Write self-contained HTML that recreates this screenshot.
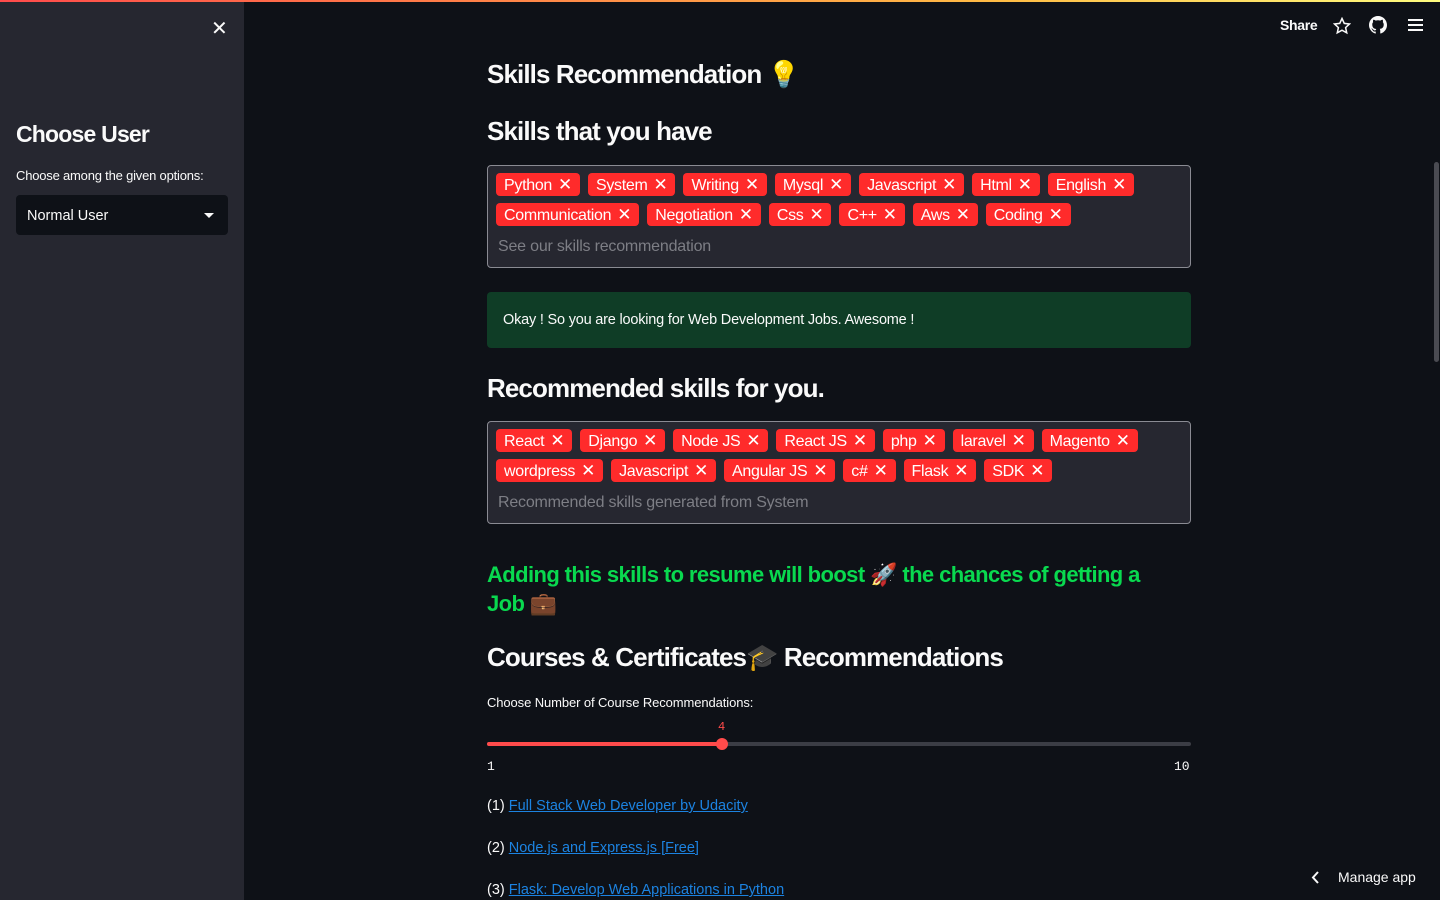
<!DOCTYPE html>
<html><head><meta charset="utf-8"><style>
*{box-sizing:border-box;margin:0;padding:0}
body{width:1440px;height:900px;overflow:hidden;background:#0e1117;font-family:"Liberation Sans",sans-serif;color:#fafafa;position:relative}
.topbar{position:absolute;top:0;left:0;width:1440px;height:2px;background:linear-gradient(90deg,#ff4b4b,#ffbd45 70%,#fffd80)}
.side{position:absolute;top:2px;left:0;width:244px;height:898px;background:#262730}
.side .x{position:absolute;left:211px;top:14px;font-size:20px;color:#fafafa}
.side h2{position:absolute;left:16px;top:119px;font-size:23px;font-weight:bold;letter-spacing:-0.8px}
.side .lbl{position:absolute;left:16px;top:166px;font-size:13px;letter-spacing:-0.2px}
.sel{position:absolute;left:16px;top:193px;width:212px;height:40px;background:#0e1117;border-radius:4px;font-size:14.5px;padding:13px 11px}
.sel .car{position:absolute;right:14px;top:18px;border-left:5px solid transparent;border-right:5px solid transparent;border-top:5px solid #fafafa}
.tr{position:absolute;top:17px;font-size:14px;font-weight:bold}
.h{position:absolute;left:487px;font-weight:bold;font-size:26px;letter-spacing:-0.9px;white-space:nowrap}
.box{position:absolute;left:487px;width:704px;height:103px;background:#262730;border:1px solid #8a8b93;border-radius:4px;padding:7px 8px}
.tag{display:inline-block;background:#ff2b2b;color:#fff;font-size:16px;height:23px;line-height:23px;padding:0 8px 0 8px;border-radius:4px;margin:0 8px 7px 0;letter-spacing:-0.3px}
.tag b{font-weight:normal;margin-left:6px;font-size:17px}
.ph{color:#7d7e85;font-size:16px;margin:5px 3px 0 2px;letter-spacing:-0.2px}
.ok{position:absolute;left:487px;top:292px;width:704px;height:56px;background:#0f3d26;border-radius:4px;font-size:14.5px;padding:20px 16px;letter-spacing:-0.2px}
.green{position:absolute;left:487px;top:560px;width:680px;color:#09d94f;font-weight:bold;font-size:22px;line-height:29px;letter-spacing:-0.6px}
.lk{position:absolute;left:487px;font-size:14.5px;letter-spacing:0px}
.lk a{color:#1c83e1;text-decoration:underline}
</style></head><body>
<div class="topbar"></div>
<div class="side"><div class="x">✕</div><h2>Choose User</h2><div class="lbl">Choose among the given options:</div><div class="sel">Normal User<div class="car"></div></div></div>
<div class="tr" style="left:1280px;letter-spacing:-0.3px">Share</div>
<svg style="position:absolute;left:1333px;top:17px" width="18" height="18" viewBox="0 0 24 24" fill="none" stroke="#fafafa" stroke-width="2"><path d="M12 2l3 6.5 7 .8-5.2 4.8 1.5 7L12 17.6 5.7 21.1l1.5-7L2 9.3l7-.8z"/></svg>
<svg style="position:absolute;left:1369px;top:16px" width="18" height="18" viewBox="0 0 16 16" fill="#fafafa"><path d="M8 0C3.6 0 0 3.6 0 8c0 3.5 2.3 6.5 5.5 7.6.4.1.5-.2.5-.4v-1.4c-2.2.5-2.7-1-2.7-1-.4-.9-.9-1.2-.9-1.2-.7-.5.1-.5.1-.5.8.1 1.2.8 1.2.8.7 1.3 1.9.9 2.3.7.1-.5.3-.9.5-1.1-1.8-.2-3.6-.9-3.6-4 0-.9.3-1.6.8-2.1-.1-.2-.4-1 .1-2.1 0 0 .7-.2 2.2.8.6-.2 1.3-.3 2-.3s1.4.1 2 .3c1.5-1 2.2-.8 2.2-.8.4 1.1.2 1.9.1 2.1.5.6.8 1.3.8 2.1 0 3.1-1.9 3.7-3.6 3.9.3.3.5.8.5 1.5v2.2c0 .2.1.5.6.4C13.7 14.5 16 11.5 16 8c0-4.4-3.6-8-8-8z"/></svg>
<svg style="position:absolute;left:1407px;top:18px" width="17" height="14" viewBox="0 0 17 14" stroke="#fafafa" stroke-width="2"><path d="M1 2h15M1 7h15M1 12h15"/></svg>
<div class="h" style="top:59px">Skills Recommendation 💡</div>
<div class="h" style="top:116px">Skills that you have</div>
<div class="box" style="top:165px">
<span class="tag">Python<b>✕</b></span><span class="tag">System<b>✕</b></span><span class="tag">Writing<b>✕</b></span><span class="tag">Mysql<b>✕</b></span><span class="tag">Javascript<b>✕</b></span><span class="tag">Html<b>✕</b></span><span class="tag">English<b>✕</b></span><br>
<span class="tag">Communication<b>✕</b></span><span class="tag">Negotiation<b>✕</b></span><span class="tag">Css<b>✕</b></span><span class="tag">C++<b>✕</b></span><span class="tag">Aws<b>✕</b></span><span class="tag">Coding<b>✕</b></span>
<div class="ph">See our skills recommendation</div></div>
<div class="ok">Okay ! So you are looking for Web Development Jobs. Awesome !</div>
<div class="h" style="top:373px">Recommended skills for you.</div>
<div class="box" style="top:421px">
<span class="tag">React<b>✕</b></span><span class="tag">Django<b>✕</b></span><span class="tag">Node JS<b>✕</b></span><span class="tag">React JS<b>✕</b></span><span class="tag">php<b>✕</b></span><span class="tag">laravel<b>✕</b></span><span class="tag">Magento<b>✕</b></span><br>
<span class="tag">wordpress<b>✕</b></span><span class="tag">Javascript<b>✕</b></span><span class="tag">Angular JS<b>✕</b></span><span class="tag">c#<b>✕</b></span><span class="tag">Flask<b>✕</b></span><span class="tag">SDK<b>✕</b></span>
<div class="ph">Recommended skills generated from System</div></div>
<div class="green">Adding this skills to resume will boost 🚀 the chances of getting a<br>Job 💼</div>
<div class="h" style="top:642px">Courses &amp; Certificates🎓 Recommendations</div>
<div class="lk" style="top:695px;font-size:13px;letter-spacing:-0.1px">Choose Number of Course Recommendations:</div>
<div style="position:absolute;left:718px;top:720px;color:#ff4b4b;font-size:12px;font-family:'Liberation Mono',monospace">4</div>
<div style="position:absolute;left:487px;top:742px;width:704px;height:4px;background:#3b3d45;border-radius:2px"></div>
<div style="position:absolute;left:487px;top:742px;width:235px;height:4px;background:#ff4b4b;border-radius:2px"></div>
<div style="position:absolute;left:716px;top:738px;width:12px;height:12px;background:#ff4b4b;border-radius:50%"></div>
<div style="position:absolute;left:487px;top:759px;font-size:13px;font-family:'Liberation Mono',monospace">1</div>
<div style="position:absolute;left:1174px;top:759px;font-size:13px;font-family:'Liberation Mono',monospace">10</div>
<div class="lk" style="top:798px">(1) <a>Full Stack Web Developer by Udacity</a></div>
<div class="lk" style="top:840px">(2) <a>Node.js and Express.js [Free]</a></div>
<div class="lk" style="top:882px">(3) <a>Flask: Develop Web Applications in Python</a></div>
<svg style="position:absolute;left:1311px;top:871px" width="9" height="13" viewBox="0 0 9 13" fill="none" stroke="#fafafa" stroke-width="2"><path d="M7 1L2 6.5 7 12"/></svg>
<div style="position:absolute;left:1338px;top:869px;font-size:14px">Manage app</div>
<div style="position:absolute;left:1434px;top:162px;width:5px;height:200px;background:#4a4b52;border-radius:3px"></div>
</body></html>
